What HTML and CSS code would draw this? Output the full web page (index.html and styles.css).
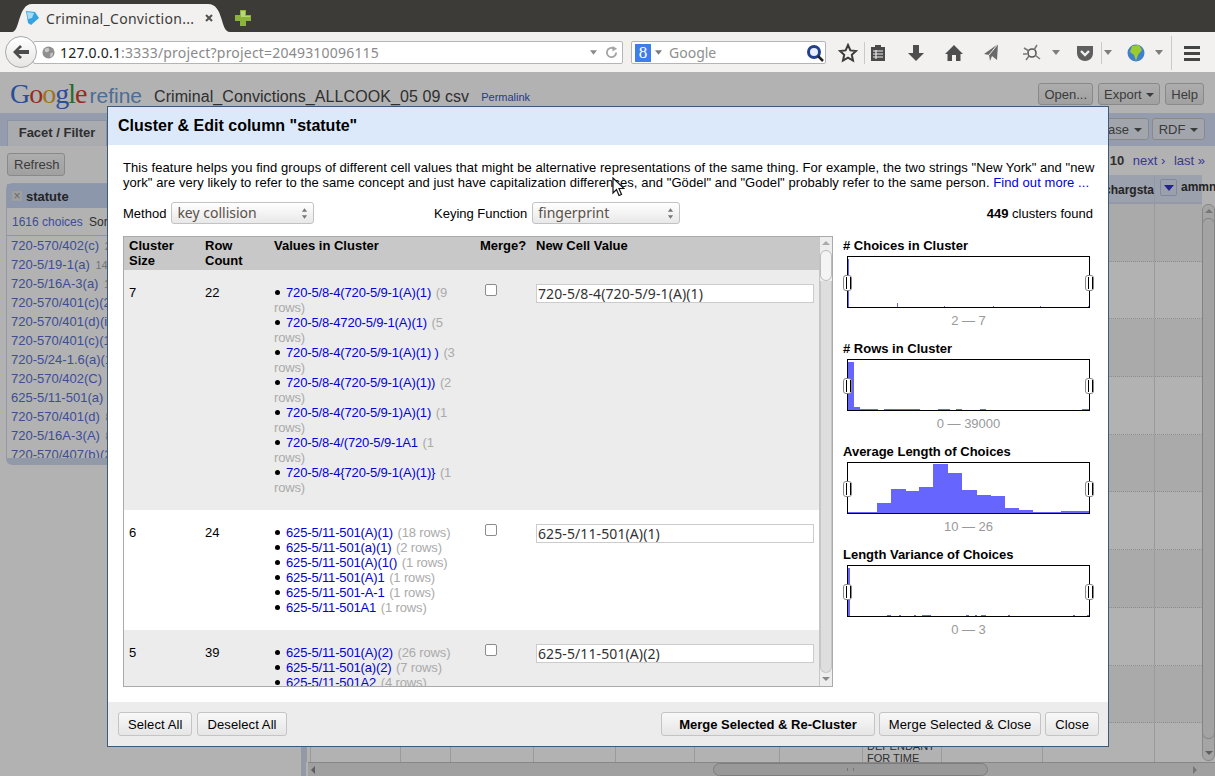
FILE: index.html
```html
<!DOCTYPE html>
<html lang="en">
<head>
  <meta charset="UTF-8" />
  <title>Criminal_Convictions_ALLCOOK_05 09 csv - Google Refine</title>
  <link rel="stylesheet" href="styles.css">
</head>
<body>
  <div class="tabstrip">
    <div class="tab">
      <svg class="favicon" viewBox="0 0 16 14"><path d="M2 0 L11 1 L15 7 L7 14 L4 12 Z" fill="#36a4e0"/><path d="M3 1 L10 2 L8 7 L4 8 Z" fill="#a8ddf7"/></svg>
      <span class="tab-title">Criminal_Conviction...</span>
      <svg class="tab-close" viewBox="0 0 8 8"><path d="M1 1 L7 7 M7 1 L1 7" stroke="#55524e" stroke-width="2"/></svg>
    </div>
    <svg class="new-tab" viewBox="0 0 16 16"><path d="M5 0 H11 V5 H16 V11 H11 V16 H5 V11 H0 V5 H5 Z" fill="#8cb43c"/><path d="M6 1 H10 V6 H15 V7 H6 Z" fill="#b7d96b"/></svg>
  </div>

  <div class="toolbar">
    <div class="urlbar">
      <svg class="site-globe" viewBox="0 0 14 14"><circle cx="7" cy="7" r="6.5" fill="#8f8f8f"/><path d="M3 3 L7 2 L8 5 L5 7 L3 6 Z M9 8 L12 7 L11 11 L9 12 Z" fill="#c9c9c9"/></svg>
      <span class="url-host">127.0.0.1</span><span class="url-rest">:3333/project?project=2049310096115</span>
      <svg class="url-caret" viewBox="0 0 8 5"><path d="M0 0 H8 L4 5 Z" fill="#8a8a8a"/></svg>
      <svg class="url-reload" viewBox="0 0 14 14"><path d="M12 7 A5 5 0 1 1 9.5 2.7" fill="none" stroke="#a5a5a5" stroke-width="2"/><path d="M8 0 L13 3 L8 6 Z" fill="#a5a5a5"/></svg>
    </div>
    <div class="backbtn">
      <svg viewBox="0 0 16 14"><path d="M7 0 L9 2 L5.5 5 H16 V9 H5.5 L9 12 L7 14 L0 7 Z" fill="#4c4c4c"/></svg>
    </div>
    <div class="searchbar">
      <span class="search-g">8</span>
      <svg class="search-caret" viewBox="0 0 8 5"><path d="M0 0 H8 L4 5 Z" fill="#7d7d7d"/></svg>
      <span class="search-text">Google</span>
      <svg class="search-glass" viewBox="0 0 18 18"><circle cx="8" cy="8" r="5.5" fill="#e8eefb" stroke="#23408f" stroke-width="3"/><path d="M12 12 L17 17" stroke="#222" stroke-width="2.5"/></svg>
    </div>
    <div class="tool-icons">
      <svg class="tool first" viewBox="0 0 20 20"><path d="M10 2 L12.4 7.4 L18 8 L13.8 11.8 L15 17.6 L10 14.7 L5 17.6 L6.2 11.8 L2 8 L7.6 7.4 Z" fill="none" stroke="#3c3c3c" stroke-width="2"/></svg>
      <span class="sep"></span>
      <svg class="tool after-sep" viewBox="0 0 20 20"><path d="M3 4 H7 V2 H13 V4 H17 V18 H3 Z" fill="#4a4a4a"/><path d="M5 8 H15 M5 11 H15 M5 14 H15 M8 7 V16" stroke="#eee" stroke-width="1.2"/></svg>
      <svg class="tool" viewBox="0 0 20 20"><path d="M7 2 H13 V10 H18 L10 18 L2 10 H7 Z" fill="#4e4e4e"/></svg>
      <svg class="tool" viewBox="0 0 20 20"><path d="M10 2 L19 11 H16.5 V18 H12 V12 H8 V18 H3.5 V11 H1 Z" fill="#4e4e4e"/></svg>
      <svg class="tool" viewBox="0 0 20 20"><path d="M16 1 L15 17 L10 13 L8 18 L7 12 L2 11 Z" fill="#6a6a6a"/><path d="M16 1 L7 12" stroke="#eee"/></svg>
      <svg class="tool wide" viewBox="0 0 20 20"><circle cx="10" cy="10" r="4" fill="none" stroke="#555" stroke-width="1.6"/><path d="M2 5 L7 8 M15 2 L12 7 M13 12 L18 16 M7 13 L4 17 M1 11 H5" stroke="#777" stroke-width="1.5"/></svg>
      <svg class="caret near" viewBox="0 0 8 5"><path d="M0 0 H8 L4 5 Z" fill="#7d7d7d"/></svg>
      <svg class="tool mid" viewBox="0 0 20 20"><path d="M2 3 H18 V10 C18 15 14 18 10 18 C6 18 2 15 2 10 Z" fill="#5e5e5e"/><path d="M6 8 L10 12 L14 8" fill="none" stroke="#eee" stroke-width="2.4"/></svg>
      <span class="sep tight"></span>
      <svg class="caret tight" viewBox="0 0 8 5"><path d="M0 0 H8 L4 5 Z" fill="#7d7d7d"/></svg>
      <svg class="tool globe" viewBox="0 0 20 20"><circle cx="10" cy="10" r="8.5" fill="#3f7fd0"/><path d="M6 3 L13 2 L16 7 L12 12 L10 18 L8 12 L4 9 Z" fill="#9ccb2e"/></svg>
      <svg class="caret last" viewBox="0 0 8 5"><path d="M0 0 H8 L4 5 Z" fill="#7d7d7d"/></svg>
      <span class="sep end"></span>
      <svg class="tool menu" viewBox="0 0 20 20"><path d="M2 3 H18 V6 H2 Z M2 9 H18 V12 H2 Z M2 15 H18 V18 H2 Z" fill="#444"/></svg>
    </div>
  </div>

  <div class="page">
    <header class="app-header">
      <div class="logo"><span class="g-blue">G</span><span class="g-red">o</span><span class="g-yellow">o</span><span class="g-blue">g</span><span class="g-green">l</span><span class="g-red">e</span> <span class="logo-refine">refine</span></div>
      <span class="project-name">Criminal_Convictions_ALLCOOK_05 09 csv</span>
      <a class="permalink" href="#">Permalink</a>
      <div class="header-btns">
        <button class="btn">Open...</button>
        <button class="btn">Export <i class="btn-caret"></i></button>
        <button class="btn">Help</button>
      </div>
    </header>

    <div class="workspace">
      <aside class="left-panel">
        <div class="left-tabs"><div class="left-tab">Facet / Filter</div></div>
        <button class="btn refresh">Refresh</button>
        <div class="facet">
          <div class="facet-title"><span class="facet-x">×</span><b>statute</b></div>
          <div class="facet-meta"><a href="#">1616 choices</a> <span>Sort by</span></div>
          <div class="facet-list">
            <div><a href="#">720-570/402(c)</a> <span>2543</span></div>
            <div><a href="#">720-5/19-1(a)</a> <span>1464</span></div>
            <div><a href="#">720-5/16A-3(a)</a> <span>1332</span></div>
            <div><a href="#">720-570/401(c)(2)</a> <span>1290</span></div>
            <div><a href="#">720-570/401(d)(i)</a> <span>1100</span></div>
            <div><a href="#">720-570/401(c)(1)</a> <span>1020</span></div>
            <div><a href="#">720-5/24-1.6(a)(1)</a> <span>990</span></div>
            <div><a href="#">720-570/402(C)</a> <span>950</span></div>
            <div><a href="#">625-5/11-501(a)</a> <span>910</span></div>
            <div><a href="#">720-570/401(d)</a> <span>870</span></div>
            <div><a href="#">720-5/16A-3(A)</a> <span>840</span></div>
            <div><a href="#">720-570/407(b)(2)</a> <span>800</span></div>
          </div>
        </div>
      </aside>
      <div class="divider"></div>
      <section class="data-panel">
        <div class="data-tools">
          <button class="btn">Freebase <i class="btn-caret"></i></button>
          <button class="btn">RDF <i class="btn-caret"></i></button>
        </div>
        <div class="pager"><b>10</b> <a href="#">next ›</a> <a href="#">last »</a></div>
        <div class="data-grid">
          <div class="data-main">
            <div class="data-row head">
              <span></span><span></span><span></span><span></span><span></span><span></span><span></span><span></span><span></span><span></span>
              <span class="col-name">chargsta</span>
              <span class="col-name"><i class="col-btn"></i>ammne</span>
            </div>
            <div class="data-row odd"><span></span><span></span><span></span><span></span><span></span><span></span><span></span><span></span><span></span><span></span><span></span><span></span></div>
            <div class="data-row"><span></span><span></span><span></span><span></span><span></span><span></span><span></span><span></span><span></span><span></span><span></span><span></span></div>
            <div class="data-row odd"><span></span><span></span><span></span><span></span><span></span><span></span><span></span><span></span><span></span><span></span><span></span><span></span></div>
            <div class="data-row"><span></span><span></span><span></span><span></span><span></span><span></span><span></span><span></span><span></span><span></span><span></span><span></span></div>
            <div class="data-row odd"><span></span><span></span><span></span><span></span><span></span><span></span><span></span><span></span><span></span><span></span><span></span><span></span></div>
            <div class="data-row"><span></span><span></span><span></span><span></span><span></span><span></span><span></span><span></span><span></span><span></span><span></span><span></span></div>
            <div class="data-row odd"><span></span><span></span><span></span><span></span><span></span><span></span><span></span><span></span><span></span><span></span><span></span><span></span></div>
            <div class="data-row"><span></span><span></span><span></span><span></span><span></span><span></span><span></span><span></span><span></span><span></span><span></span><span></span></div>
            <div class="data-row odd"><span></span><span></span><span></span><span></span><span></span><span></span><span></span><span></span><span></span><span></span><span></span><span></span></div>
            <div class="data-row last"><span></span><span></span><span></span><span></span><span></span><span></span><span></span><span></span><span class="cell-text">DEPENDANT<br>FOR TIME</span><span></span><span></span><span></span></div>
          </div>
          <div class="v-scroll">
            <div class="v-arrow"></div>
            <div class="v-thumb"></div>
            <div class="v-arrow down"></div>
          </div>
        </div>
        <div class="h-scroll">
          <i class="h-arrow"></i>
          <div class="h-thumb"><i></i></div>
          <i class="h-arrow right"></i>
        </div>
      </section>
    </div>

    <div class="overlay"></div>

    <div class="dialog">
      <div class="dialog-header">Cluster &amp; Edit column "statute"</div>
      <div class="dialog-body">
        <p class="intro">This feature helps you find groups of different cell values that might be alternative representations of the same thing. For example, the two strings "New York" and "new york" are very likely to refer to the same concept and just have capitalization differences, and "Gödel" and "Godel" probably refer to the same person. <a href="#">Find out more ...</a></p>
        <div class="controls">
          <div class="control method">
            <label>Method</label>
            <div class="select"><span>key collision</span><svg viewBox="0 0 8 14"><path d="M4 1 L7 5 H1 Z M4 13 L7 9 H1 Z" fill="#777"/></svg></div>
          </div>
          <div class="control">
            <label>Keying Function</label>
            <div class="select keying"><span>fingerprint</span><svg viewBox="0 0 8 14"><path d="M4 1 L7 5 H1 Z M4 13 L7 9 H1 Z" fill="#777"/></svg></div>
          </div>
          <div class="found"><b>449</b> clusters found</div>
        </div>
        <div class="main-row">
          <div class="cluster-box">
            <div class="cluster-scroll">
              <table class="cluster-table">
                <thead>
                  <tr>
                    <th class="c-size">Cluster Size</th>
                    <th class="c-count">Row Count</th>
                    <th class="c-values">Values in Cluster</th>
                    <th class="c-merge">Merge?</th>
                    <th class="c-new">New Cell Value</th>
                  </tr>
                </thead>
                <tbody>
                  <tr class="odd">
                    <td>7</td>
                    <td>22</td>
                    <td>
                      <ul>
                        <li><a href="#">720-5/8-4(720-5/9-1(A)(1)</a> <span>(9 rows)</span></li>
                        <li><a href="#">720-5/8-4720-5/9-1(A)(1)</a> <span>(5 rows)</span></li>
                        <li><a href="#">720-5/8-4(720-5/9-1(A)(1) )</a> <span>(3 rows)</span></li>
                        <li><a href="#">720-5/8-4(720-5/9-1(A)(1))</a> <span>(2 rows)</span></li>
                        <li><a href="#">720-5/8-4(720-5/9-1)A)(1)</a> <span>(1 rows)</span></li>
                        <li><a href="#">720-5/8-4/(720-5/9-1A1</a> <span>(1 rows)</span></li>
                        <li><a href="#">720-5/8-4{720-5/9-1(A)(1)}</a> <span>(1 rows)</span></li>
                      </ul>
                    </td>
                    <td><input type="checkbox" class="merge-check"></td>
                    <td><input type="text" class="new-value" value="720-5/8-4(720-5/9-1(A)(1)"></td>
                  </tr>
                  <tr>
                    <td>6</td>
                    <td>24</td>
                    <td>
                      <ul>
                        <li><a href="#">625-5/11-501(A)(1)</a> <span>(18 rows)</span></li>
                        <li><a href="#">625-5/11-501(a)(1)</a> <span>(2 rows)</span></li>
                        <li><a href="#">625-5/11-501(A)(1()</a> <span>(1 rows)</span></li>
                        <li><a href="#">625-5/11-501(A)1</a> <span>(1 rows)</span></li>
                        <li><a href="#">625-5/11-501-A-1</a> <span>(1 rows)</span></li>
                        <li><a href="#">625-5/11-501A1</a> <span>(1 rows)</span></li>
                      </ul>
                    </td>
                    <td><input type="checkbox" class="merge-check"></td>
                    <td><input type="text" class="new-value" value="625-5/11-501(A)(1)"></td>
                  </tr>
                  <tr class="odd">
                    <td>5</td>
                    <td>39</td>
                    <td>
                      <ul>
                        <li><a href="#">625-5/11-501(A)(2)</a> <span>(26 rows)</span></li>
                        <li><a href="#">625-5/11-501(a)(2)</a> <span>(7 rows)</span></li>
                        <li><a href="#">625-5/11-501A2</a> <span>(4 rows)</span></li>
                      </ul>
                    </td>
                    <td><input type="checkbox" class="merge-check"></td>
                    <td><input type="text" class="new-value" value="625-5/11-501(A)(2)"></td>
                  </tr>
                </tbody>
              </table>
            </div>
            <div class="table-scroll">
              <div class="v-arrow"></div>
              <div class="table-thumb"></div>
              <div class="table-track"></div>
              <div class="v-arrow down"></div>
            </div>
          </div>

          <div class="histograms">
            <div class="histogram">
              <h4># Choices in Cluster</h4>
              <div class="hist-box">
                <svg viewBox="0 0 241 50"><path d="M0 2H1V50H0Z M49 46H50V50H49Z M96 49H97V50H96Z M145 49H146V50H145Z M192 49H193V50H192Z M240 49H241V50H240Z" fill="#6666ff"/></svg>
                <i class="handle left"></i><i class="handle right"></i>
              </div>
              <div class="hist-range">2 — 7</div>
            </div>
            <div class="histogram">
              <h4># Rows in Cluster</h4>
              <div class="hist-box">
                <svg viewBox="0 0 241 50"><path d="M0 2H6V47H12V49H30V50H0Z M36 49H72V50H36Z M90 49H102V50H90Z M108 49H114V50H108Z M132 49H138V50H132Z M234 49H241V50H234Z" fill="#6666ff"/></svg>
                <i class="handle left"></i><i class="handle right"></i>
              </div>
              <div class="hist-range">0 — 39000</div>
            </div>
            <div class="histogram">
              <h4>Average Length of Choices</h4>
              <div class="hist-box">
                <svg viewBox="0 0 241 50"><path d="M0 49H29V40H43V26H58V28H71V24H85V1H100V10H114V27H129V32H143V33H157V45H171V47H185V49H213V48H241V50H0Z" fill="#6666ff"/></svg>
                <i class="handle left"></i><i class="handle right"></i>
              </div>
              <div class="hist-range">10 — 26</div>
            </div>
            <div class="histogram">
              <h4>Length Variance of Choices</h4>
              <div class="hist-box">
                <svg viewBox="0 0 241 50"><path d="M0 2H2V50H0Z M39 49H43V50H39Z M51 49H53V50H51Z M66 49H68V50H66Z M74 49H83V50H74Z M118 49H121V50H118Z M127 49H129V50H127Z M133 49H138V50H133Z M160 49H162V50H160Z M225 49H227V50H225Z M239 49H241V50H239Z" fill="#6666ff"/></svg>
                <i class="handle left"></i><i class="handle right"></i>
              </div>
              <div class="hist-range">0 — 3</div>
            </div>
          </div>
        </div>
      </div>
      <div class="dialog-footer">
        <div class="footer-group left">
          <button class="btn">Select All</button>
          <button class="btn">Deselect All</button>
        </div>
        <div class="footer-group">
          <button class="btn strong">Merge Selected &amp; Re-Cluster</button>
          <button class="btn">Merge Selected &amp; Close</button>
          <button class="btn">Close</button>
        </div>
      </div>
    </div>

    <svg class="cursor" viewBox="0 0 13 20"><path d="M1 1 V16 L4.5 12.5 L7 18.5 L9.5 17.5 L7 11.5 H12 Z" fill="#fff" stroke="#111" stroke-width="1.2"/></svg>
  </div>
</body>
</html>
```

FILE: styles.css
```css
* {
  box-sizing: border-box;
}

body {
  margin: 0;
  width: 1215px;
  height: 776px;
  overflow: hidden;
  background-color: white;
  font-family: "Liberation Sans", Arial, sans-serif;
  font-size: 13px;
  color: #000;
}

a {
  color: #0000d8;
  text-decoration: none;
}

/* browser chrome */
.tabstrip {
  height: 32px;
  background-color: #3c3b37;
  padding: 4px 0 0 12px;
  display: flex;
  align-items: flex-start;
}

.tab {
  width: 218px;
  height: 28px;
  background-color: #f2f1f0;
  clip-path: path("M0 28 C8 28 6 0 20 0 H196 C212 0 208 28 218 28 Z");
  display: flex;
  align-items: center;
  padding-left: 12px;
  font-family: "Noto Sans", sans-serif;
  font-size: 14px;
  letter-spacing: 0.3px;
  color: #3c3b37;
}

.favicon {
  width: 16px;
  height: 14px;
  margin-right: 6px;
}

.tab-title {
  width: 155px;
  white-space: nowrap;
}

.tab-close {
  width: 8px;
  height: 8px;
  margin-left: 4px;
}

.new-tab {
  width: 16px;
  height: 16px;
  margin: 6px 0 0 5px;
}

.toolbar {
  position: relative;
  height: 40px;
  background-color: #f2f1f0;
  padding: 9px 0 0 33px;
  display: flex;
  align-items: flex-start;
}

.backbtn {
  position: absolute;
  left: 5px;
  top: 4px;
  width: 32px;
  height: 32px;
  border-radius: 50%;
  border: 1px solid #a9a9a9;
  background: linear-gradient(#fff, #e6e5e4);
  display: flex;
  align-items: center;
  justify-content: center;
}

.backbtn svg {
  width: 16px;
  height: 14px;
}

.urlbar {
  width: 590px;
  height: 23px;
  background-color: #fff;
  border: 1px solid #b5b5b5;
  border-radius: 2px;
  display: flex;
  align-items: center;
  padding-left: 8px;
  font-family: "Noto Sans", sans-serif;
  font-size: 14px;
  letter-spacing: 0.2px;
}

.site-globe {
  width: 13px;
  height: 13px;
  margin-right: 5px;
}

.url-host {
  color: #222;
}

.url-rest {
  color: #8a8a8a;
}

.url-caret {
  width: 7px;
  height: 5px;
  margin-left: auto;
}

.url-reload {
  width: 13px;
  height: 13px;
  margin: 0 4px 0 8px;
}

.searchbar {
  width: 195px;
  height: 23px;
  margin-left: 8px;
  background-color: #fff;
  border: 1px solid #b5b5b5;
  border-radius: 2px;
  display: flex;
  align-items: center;
  padding-left: 3px;
  font-family: "Noto Sans", sans-serif;
  font-size: 14px;
}

.search-g {
  width: 16px;
  height: 18px;
  background-color: #3f7ee8;
  color: #fff;
  font-family: "Liberation Serif", serif;
  font-size: 17px;
  line-height: 18px;
  text-align: center;
}

.search-caret {
  width: 7px;
  height: 5px;
  margin-left: 4px;
}

.search-text {
  margin-left: 7px;
  color: #8f8f8f;
}

.search-glass {
  width: 18px;
  height: 18px;
  margin-left: auto;
  margin-right: 1px;
}

.tool-icons {
  display: flex;
  align-items: center;
  height: 23px;
}

.tool {
  width: 20px;
  height: 20px;
  margin-left: 18px;
}

.tool.first {
  margin-left: 12px;
}

.tool.after-sep {
  margin-left: 3px;
}

.tool.wide {
  margin-left: 20px;
}

.tool.mid {
  margin-left: 15px;
}

.tool.globe {
  margin-left: 14px;
}

.tool.menu {
  margin-left: 10px;
}

.caret {
  width: 8px;
  height: 5px;
}

.caret.near {
  margin-left: 10px;
}

.caret.last {
  margin-left: 9px;
}

.caret.tight {
  margin-left: 2px;
}

.sep {
  width: 1px;
  height: 22px;
  background-color: #c9c9c9;
  margin-left: 6px;
}

.sep.end {
  height: 34px;
  margin-left: 8px;
}

/* the refine page behind the dialog */
.page {
  position: relative;
  height: 704px;
  overflow: hidden;
}

.app-header {
  height: 41px;
  display: flex;
  align-items: center;
  padding: 0 11px 0 10px;
}

.logo {
  width: 144px;
  margin-top: 2px;
  white-space: nowrap;
  font-family: "Liberation Serif", serif;
  font-size: 28px;
  letter-spacing: -1px;
}

.g-blue {
  color: #3d70d8;
}

.g-red {
  color: #d8402c;
}

.g-yellow {
  color: #e0a820;
}

.g-green {
  color: #3a9a3a;
}

.logo-refine {
  margin-left: -3px;
  font-family: "Liberation Sans", sans-serif;
  font-size: 21px;
  font-weight: normal;
  letter-spacing: 0;
  color: #6f9bd8;
}

.project-name {
  font-size: 16px;
  letter-spacing: 0.08px;
  color: #444;
  margin-top: 9px;
}

.permalink {
  font-size: 11px;
  margin: 9px 0 0 12px;
  color: #3355cc;
}

.header-btns {
  margin-left: auto;
  margin-top: 3px;
  display: flex;
  gap: 5px;
}

.btn {
  height: 23px;
  padding: 0 9px;
  font-family: "Liberation Sans", Arial, sans-serif;
  font-size: 13px;
  color: #000;
  background: linear-gradient(#f8f8f8, #e6e6e6);
  border: 1px solid #c4c4c4;
  border-radius: 3px;
}

.header-btns .btn {
  height: 22px;
  padding: 0 5px;
  color: #555;
}

.btn-caret {
  display: inline-block;
  border-left: 4px solid transparent;
  border-right: 4px solid transparent;
  border-top: 4px solid #555;
  vertical-align: 2px;
  margin-left: 1px;
}

.workspace {
  height: 663px;
  display: flex;
}

.left-panel {
  width: 301px;
  background-color: #fff;
}

.left-tabs {
  height: 33px;
  background-color: #d6e0fa;
  padding: 7px 0 0 7px;
}

.left-tab {
  width: 100px;
  height: 26px;
  background-color: #f2f5fb;
  border: 1px solid #c8d4ea;
  border-bottom: none;
  font-weight: bold;
  font-size: 13px;
  text-align: center;
  line-height: 24px;
  color: #444;
}

.refresh {
  margin: 7px 0 0 7px;
  padding: 0 6px;
  width: 58px;
  display: block;
  color: #555;
}

.facet {
  margin: 7px 0 0 6px;
  width: 295px;
  background-color: #fff;
  border: 1px solid #d3ddf0;
  border-bottom: 7px solid #d3ddf0;
  border-radius: 6px;
}

.facet-title {
  height: 24px;
  background-color: #cbd8f5;
  display: flex;
  align-items: center;
  padding-left: 5px;
  font-size: 13px;
  color: #333;
}

.facet-x {
  width: 10px;
  height: 10px;
  margin-right: 4px;
  background-color: #e4e4e4;
  color: #999;
  font-size: 12px;
  line-height: 10px;
  text-align: center;
}

.facet-meta {
  height: 28px;
  padding: 7px 0 0 5px;
  font-size: 12px;
  color: #444;
  border-bottom: 1px solid #c7d4ee;
  white-space: nowrap;
}

.facet-meta a {
  color: #5970d4;
  margin-right: 3px;
}

.facet-list {
  height: 222px;
  overflow: hidden;
  padding: 0 0 0 4px;
}

.facet-list div {
  height: 19px;
  line-height: 19px;
  white-space: nowrap;
}

.facet-list a {
  color: #5970d4;
}

.facet-list span {
  color: #aaa;
  font-size: 11px;
  margin-left: 2px;
}

.divider {
  width: 5px;
  background-color: #d3dcf0;
}

.data-panel {
  flex: 1;
  min-width: 0;
}

.data-tools {
  height: 33px;
  background-color: #d6e0fa;
  display: flex;
  justify-content: flex-end;
  gap: 3px;
  padding: 5px 10px 0 0;
}

.data-tools .btn {
  height: 22px;
  padding: 0 6px;
  background: #e8edf7;
  color: #555;
}

.pager {
  height: 29px;
  padding: 7px 10px 0 0;
  text-align: right;
  font-size: 13px;
  color: #444;
}

.pager a {
  margin-left: 5px;
  color: #5050d8;
}

.data-grid {
  height: 587px;
  display: flex;
  overflow: hidden;
}

.data-main {
  width: 896px;
}

.data-row {
  display: grid;
  grid-template-columns: 4px 90px 50px 83px 82px 79px 85px 83px 79px 101px 112px 48px;
  height: 57.7px;
  border-bottom: 1px dotted #ccc;
  background-color: #fff;
}

.data-row span {
  border-left: 1px solid #ddd;
  overflow: hidden;
}

.data-row.odd {
  background-color: #f4f4f4;
}

.data-row.head {
  height: 29px;
  background-color: #e0e7fa;
  border-bottom: 2px solid #d3dcf0;
}

.data-row.head span {
  border-left-color: #d3dcf0;
}

.data-row.last {
  border-bottom: none;
}

.col-name {
  font-size: 12px;
  font-weight: bold;
  color: #333;
  white-space: nowrap;
  text-align: right;
  padding-top: 8px;
}

.data-row .col-name:last-child {
  text-align: left;
  padding-left: 5px;
  padding-top: 4px;
  overflow: visible;
}

.col-btn {
  display: inline-block;
  vertical-align: middle;
  width: 17px;
  height: 17px;
  margin-right: 4px;
  border: 1px solid #b7c3e6;
  border-radius: 2px;
  background-color: #dfe6f6;
  position: relative;
}

.col-btn::after {
  content: "";
  position: absolute;
  left: 3px;
  top: 5px;
  border-left: 5px solid transparent;
  border-right: 5px solid transparent;
  border-top: 6px solid #3333cc;
}

.data-row .cell-text {
  padding: 17px 0 0 4px;
  font-size: 11px;
  line-height: 12px;
  color: #444;
}

.v-scroll {
  width: 13px;
  height: 557px;
  margin-top: 29px;
  background-color: #ededed;
  border: 1px solid #c2c2c2;
  border-radius: 6px;
  display: flex;
  flex-direction: column;
}

.v-arrow {
  height: 13px;
  position: relative;
  flex: none;
}

.v-arrow::after {
  content: "";
  position: absolute;
  left: 2px;
  top: 4px;
  border-left: 4px solid transparent;
  border-right: 4px solid transparent;
  border-bottom: 4px solid #aaa;
}

.v-arrow.down::after {
  border-bottom: none;
  border-top: 4px solid #888;
}

.v-thumb {
  flex: 1;
  margin: 0 -1px 8px;
  border: 1px solid #bcbcbc;
  border-radius: 6px;
  background-color: #eaeaea;
}

.h-scroll {
  height: 14px;
  margin-left: 2px;
  background-color: #e6e6e6;
  border-top: 1px solid #c2c2c2;
  display: flex;
  align-items: center;
  padding: 0 18px 0 3px;
}

.h-arrow {
  width: 0;
  height: 0;
  border-top: 4px solid transparent;
  border-bottom: 4px solid transparent;
  border-right: 4px solid #888;
}

.h-arrow.right {
  margin-left: auto;
  border-right: none;
  border-left: 4px solid #aaa;
}

.h-thumb {
  width: 275px;
  height: 13px;
  margin-left: 398px;
  background-color: #dcdcdc;
  border: 1px solid #b4b4b4;
  border-radius: 7px;
}

.h-thumb i {
  display: block;
  width: 7px;
  height: 3px;
  margin: 4px auto 0;
  border-left: 1px solid #aaa;
  border-right: 1px solid #aaa;
}

.overlay {
  position: absolute;
  inset: 0;
  background-color: rgba(0, 0, 0, 0.3);
}

/* cluster dialog */
.dialog {
  position: absolute;
  left: 107px;
  top: 34px;
  width: 1002px;
  height: 641px;
  background-color: #fff;
  border: 1px solid #3d5a78;
  display: flex;
  flex-direction: column;
}

.dialog-header {
  height: 38px;
  background-color: #dce9fb;
  padding: 9px 0 0 10px;
  font-size: 16px;
  font-weight: bold;
  line-height: 19px;
}

.dialog-body {
  flex: 1;
  min-height: 0;
  padding: 15px;
}

.intro {
  margin: 0 -4px 0 0;
  font-size: 13px;
  letter-spacing: 0.07px;
  line-height: 15px;
  height: 30px;
}

.controls {
  display: flex;
  align-items: center;
  height: 22px;
  margin-top: 12px;
}

.control {
  display: flex;
  align-items: center;
}

.control.method {
  width: 311px;
}

.control label {
  margin-right: 5px;
  font-size: 13px;
}

.select {
  width: 143px;
  height: 22px;
  border: 1px solid #c2c2c2;
  border-radius: 3px;
  background: linear-gradient(#fff, #e8e8e8);
  display: flex;
  align-items: center;
  justify-content: space-between;
  padding: 0 5px 2px;
  font-family: "Noto Sans", sans-serif;
  font-size: 14px;
  color: #5a5048;
}

.select.keying {
  width: 148px;
}

.select svg {
  width: 7px;
  height: 13px;
  margin-top: 2px;
}

.found {
  margin-left: auto;
  font-size: 13px;
}

.main-row {
  display: flex;
  margin-top: 12px;
}

.cluster-box {
  width: 710px;
  height: 451px;
  border: 1px solid #aaa;
  display: flex;
  background-color: #ececec;
}

.cluster-scroll {
  width: 695px;
  overflow: hidden;
}

.cluster-table {
  width: 695px;
  border-collapse: collapse;
  table-layout: fixed;
}

.cluster-table th {
  background-color: #c8c8c8;
  font-size: 13px;
  font-weight: bold;
  text-align: left;
  vertical-align: top;
  height: 33px;
  padding: 1px 5px 2px;
  line-height: 15px;
}

.c-size {
  width: 76px;
}

.c-count {
  width: 69px;
}

.c-values {
  width: 206px;
}

.c-merge {
  width: 56px;
}

.cluster-table td {
  vertical-align: top;
  padding: 15px 5px;
  font-size: 13px;
  line-height: 15px;
  background-color: #fff;
}

.cluster-table .odd td {
  background-color: #ececec;
}

.cluster-table ul {
  width: 190px;
  margin: 0;
  padding: 0;
  list-style: none;
}

.cluster-table li::before {
  content: "";
  display: inline-block;
  width: 5px;
  height: 5px;
  margin: 0 6px 2px 1px;
  border-radius: 50%;
  background-color: #000;
}

.cluster-table li a {
  letter-spacing: -0.15px;
}

.cluster-table li span {
  color: #aaa;
  letter-spacing: -0.15px;
  margin-left: 1px;
}

.merge-check {
  margin: -1px 0 0 5px;
  display: block;
  width: 12px;
  height: 12px;
  appearance: none;
  background-color: #fff;
  border: 1px solid #8c8c8c;
  border-radius: 2px;
}

.new-value {
  width: 278px;
  height: 19px;
  margin-top: -1px;
  display: block;
  padding: 0 1px;
  border: 1px solid #ccc;
  background-color: #fff;
  font-family: "Noto Sans", sans-serif;
  font-size: 14px;
  letter-spacing: 0.1px;
  color: #333;
}

.table-scroll {
  width: 13px;
  background-color: #ededed;
  border-left: 1px solid #c6c6c6;
  display: flex;
  flex-direction: column;
}

.table-thumb {
  height: 31px;
  border: 1px solid #bbb;
  border-radius: 6px;
  background-color: #f4f4f4;
}

.table-track {
  flex: 1;
  border: 1px solid #c6c6c6;
  border-top: none;
  border-radius: 0 0 6px 6px;
  background-color: #dedede;
}

.histograms {
  width: 250px;
  margin-left: 10px;
}

.histogram {
  height: 103px;
  padding-top: 2px;
}

.histogram h4 {
  margin: 0 0 3px;
  font-size: 13px;
  line-height: 15px;
  font-weight: bold;
}

.hist-box {
  position: relative;
  width: 243px;
  height: 52px;
  margin-left: 4px;
  border: 1px solid #000;
}

.hist-box svg {
  display: block;
  width: 241px;
  height: 50px;
}

.handle {
  position: absolute;
  top: 18px;
  width: 9px;
  height: 16px;
  background-color: #fff;
  border: 1px solid #888;
  border-radius: 3px;
}

.handle::after {
  content: "";
  position: absolute;
  left: 2px;
  top: 1px;
  width: 3px;
  height: 12px;
  border-left: 1px solid #000;
  border-right: 1px solid #000;
}

.handle.left {
  left: -5px;
}

.handle.right {
  right: -5px;
}

.hist-range {
  width: 251px;
  margin-top: 5px;
  text-align: center;
  font-size: 13px;
  line-height: 15px;
  color: #999;
}

.dialog-footer {
  height: 44px;
  background-color: #ececec;
  display: flex;
  justify-content: space-between;
  align-items: flex-start;
  padding: 10px 9px 0 10px;
}

.footer-group {
  display: flex;
  gap: 4px;
}

.footer-group.left {
  gap: 5px;
}

.dialog-footer .btn {
  height: 24px;
  letter-spacing: 0.1px;
}

.dialog-footer .strong {
  font-weight: bold;
  padding: 0 17px;
  letter-spacing: 0;
}

.cursor {
  position: absolute;
  left: 612px;
  top: 105px;
  width: 13px;
  height: 20px;
}
```
